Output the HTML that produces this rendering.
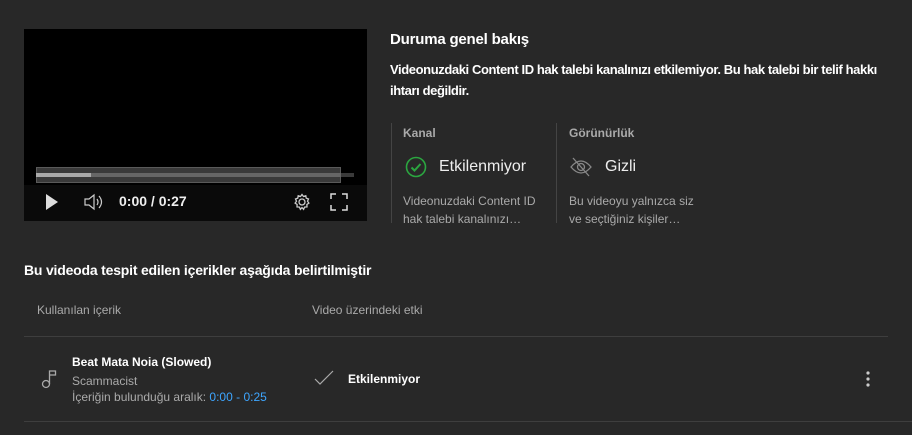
<!DOCTYPE html>
<html><head><meta charset="utf-8"><style>
body{margin:0;width:912px;height:435px;background:#282828;font-family:"Liberation Sans",sans-serif;color:#fff;position:relative;overflow:hidden}
.a{position:absolute;white-space:nowrap}
</style></head><body>
<div class="a" style="left:24px;top:29px;width:343px;height:192px;background:#000"></div>
<div class="a" style="left:24px;top:185px;width:343px;height:36px;background:#0a0a0a"></div>
<div class="a" style="left:36px;top:167px;width:305px;height:16px;border:1px solid #5a5a5a;background:#3a3a3a;box-sizing:border-box"></div>
<div class="a" style="left:36px;top:173px;width:318px;height:4px;background:#3a3a3a"></div>
<div class="a" style="left:36px;top:173px;width:305px;height:4px;background:#666"></div>
<div class="a" style="left:36px;top:173px;width:55px;height:4px;background:#aaa"></div>
<svg class="a" style="left:44px;top:193px" width="16" height="18"><path d="M2 1 L14 9 L2 17Z" fill="#ddd"/></svg>
<svg class="a" style="left:84px;top:193px" width="20" height="18" fill="none" stroke="#ccc" stroke-width="1.2"><path d="M1 6h4l5-4v14l-5-4H1z"/><path d="M13 6q2 3 0 6M15 3q5 6 0 12"/></svg>
<div class="a" style="left:119px;top:193px;font-size:14px;font-weight:bold;color:#eee">0:00 / 0:27</div>
<svg class="a" style="left:293px;top:193px" width="18" height="18" fill="none" stroke="#ccc" stroke-width="1.3"><circle cx="9" cy="9" r="3"/><path d="M9 1.5l1.5 2 2.3-.8.4 2.4 2.3.9-1 2.2 1.4 1.9-2 1.4.1 2.4-2.4.2-1 2.2-1.6-1.7-1.6 1.7-1-2.2-2.4-.2.1-2.4-2-1.4 1.4-1.9-1-2.2 2.3-.9.4-2.4 2.3.8z"/></svg>
<svg class="a" style="left:330px;top:193px" width="18" height="18" fill="none" stroke="#ddd" stroke-width="1.5"><path d="M1 6V1h5M12 1h5v5M17 12v5h-5M6 17H1v-5"/></svg>

<div class="a" style="left:390px;top:31px;font-size:15px;font-weight:bold;letter-spacing:-0.2px">Duruma genel bakış</div>
<div class="a" style="left:390px;top:59px;font-size:13px;line-height:21px;font-weight:bold;letter-spacing:-0.4px">Videonuzdaki Content ID hak talebi kanalınızı etkilemiyor. Bu hak talebi bir telif hakkı<br>ihtarı değildir.</div>
<div class="a" style="left:391px;top:123px;width:1px;height:100px;background:#444"></div>
<div class="a" style="left:556px;top:123px;width:1px;height:100px;background:#444"></div>
<div class="a" style="left:403px;top:126px;font-size:12px;color:#aaa;font-weight:bold">Kanal</div>
<div class="a" style="left:569px;top:126px;font-size:12px;color:#aaa;font-weight:bold">Görünürlük</div>
<svg class="a" style="left:405px;top:156px" width="22" height="22" fill="none" stroke="#2ba640" stroke-width="1.6"><circle cx="11" cy="11" r="9.5"/><path d="M6.5 11.5l3 3 6-6.5" stroke-width="2"/></svg>
<div class="a" style="left:439px;top:158px;font-size:16px;color:#eee">Etkilenmiyor</div>
<svg class="a" style="left:570px;top:157px" width="22" height="20" fill="none" stroke="#888" stroke-width="1.3"><path d="M1 10q10-12 20 0q-10 12-20 0z"/><circle cx="11" cy="10" r="3.5"/><path d="M3 1l16 18"/></svg>
<div class="a" style="left:605px;top:158px;font-size:16px;color:#eee">Gizli</div>
<div class="a" style="left:403px;top:192px;font-size:12px;line-height:18px;color:#aaa">Videonuzdaki Content ID<br>hak talebi kanalınızı…</div>
<div class="a" style="left:569px;top:192px;font-size:12px;line-height:18px;color:#aaa">Bu videoyu yalnızca siz<br>ve seçtiğiniz kişiler…</div>

<div class="a" style="left:24px;top:262px;font-size:14px;font-weight:bold;letter-spacing:-0.2px">Bu videoda tespit edilen içerikler aşağıda belirtilmiştir</div>
<div class="a" style="left:37px;top:303px;font-size:12px;color:#aaa">Kullanılan içerik</div>
<div class="a" style="left:312px;top:303px;font-size:12px;color:#aaa">Video üzerindeki etki</div>
<div class="a" style="left:24px;top:336px;width:864px;height:1px;background:#3e3e3e"></div>

<svg class="a" style="left:41px;top:369px" width="16" height="20" fill="none" stroke="#aaa" stroke-width="1.3"><circle cx="5" cy="15" r="3.5"/><path d="M8.5 15V2h6v4h-6"/></svg>
<div class="a" style="left:72px;top:355px;font-size:12px;font-weight:bold">Beat Mata Noia (Slowed)</div>
<div class="a" style="left:72px;top:374px;font-size:12px;color:#aaa">Scammacist</div>
<div class="a" style="left:72px;top:390px;font-size:12px;color:#aaa">İçeriğin bulunduğu aralık: <span style="color:#3ea6ff">0:00 - 0:25</span></div>
<svg class="a" style="left:314px;top:370px" width="20" height="16" fill="none" stroke="#aaa" stroke-width="1.2"><path d="M1 9l5 5L19 1"/></svg>
<div class="a" style="left:348px;top:372px;font-size:12px;font-weight:bold">Etkilenmiyor</div>
<svg class="a" style="left:864px;top:370px" width="8" height="18" fill="#ccc"><circle cx="4" cy="3" r="1.6"/><circle cx="4" cy="9" r="1.6"/><circle cx="4" cy="15" r="1.6"/></svg>
<div class="a" style="left:24px;top:421px;width:888px;height:1px;background:#3e3e3e"></div>
</body></html>
